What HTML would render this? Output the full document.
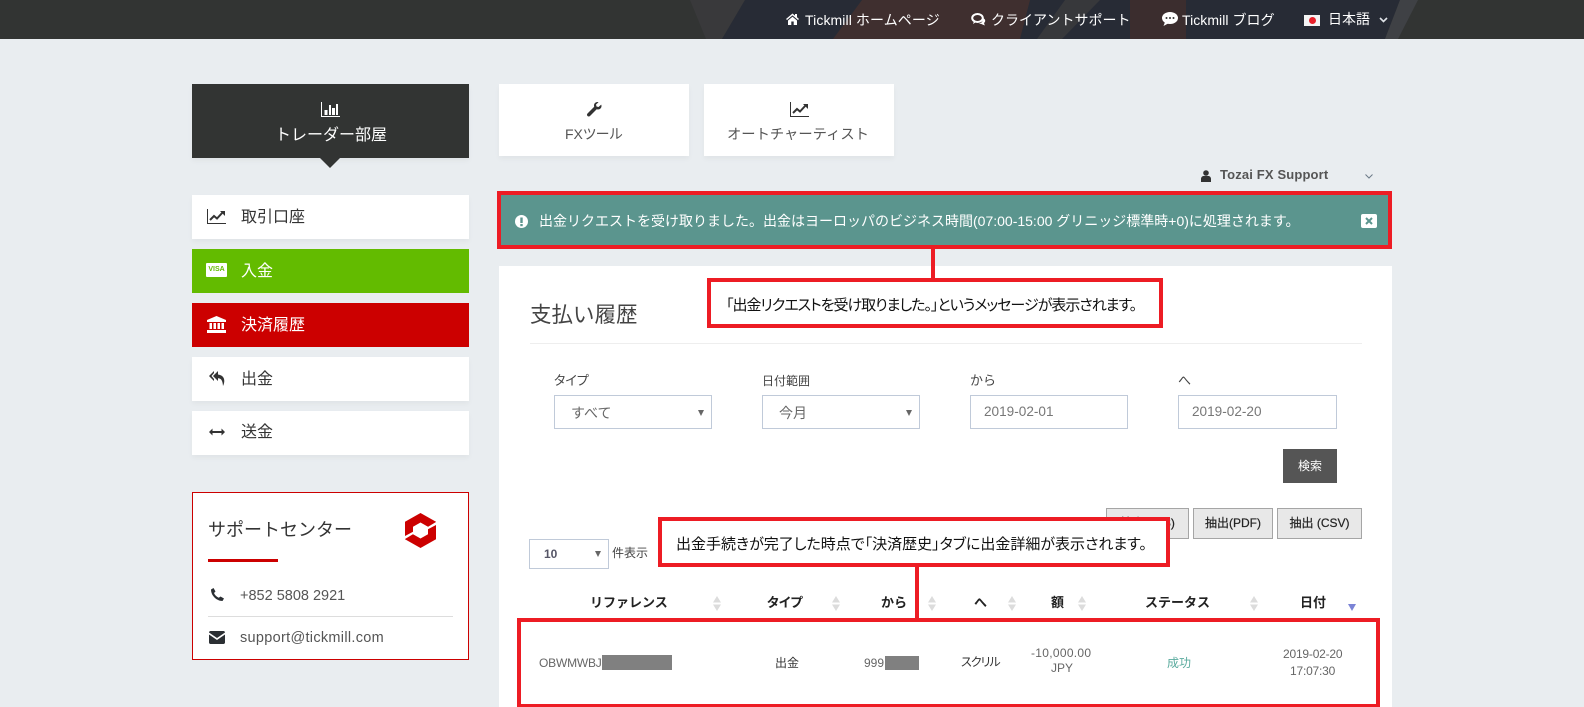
<!DOCTYPE html>
<html lang="ja"><head><meta charset="utf-8"><title>支払い履歴</title>
<style>
html,body{margin:0;padding:0}
body{width:1584px;height:707px;overflow:hidden;position:relative;background:#e9edf0;font-family:"Liberation Sans","Noto Sans CJK JP",sans-serif;color:#333}
.b{position:absolute;box-sizing:border-box}
.t{position:absolute;white-space:nowrap;line-height:20px}
.c{background:#fff;box-shadow:0 3px 5px rgba(0,0,0,.04)}
.m{font-size:16px;color:#333}
.w{color:#fff}
.l{font-size:12px;color:#444}
.f{background:#fff;border:1px solid #c0cad9}
.ar{position:absolute;width:0;height:0;border-left:3.500px solid transparent;border-right:3.500px solid transparent;border-top:6px solid #666}
.ex{background:#e8e8e8;border:1px solid #a5a5a5;font-size:12px;color:#222;text-align:center;line-height:29px;-webkit-text-stroke:.2px #222}
.r{border:4px solid #ed1c24;background:#fff}
.rl{position:absolute;background:#ed1c24}
.co{font-size:15px;color:#111;font-feature-settings:"palt";}
.h{font-size:13px;font-weight:700;color:#222}
.td{font-size:12px;color:#666}
.g{position:absolute;background:#808080}
svg{position:absolute;overflow:visible}
</style></head><body>

<!-- top bar -->
<svg style="left:0;top:0" width="1584" height="39" viewBox="0 0 1584 39">
<rect width="1584" height="39" fill="#323433"/>
<polygon points="690,0 745,0 722,39 706,39" fill="#39393b"/>
<polygon points="745,0 1400,0 1385,39 722,39" fill="#272b35"/>
<polygon points="862,0 1030,0 1020,39 833,39" fill="#3f2f2f"/>
<polygon points="1065,0 1100,0 1062,39 1037,39" fill="#37383b"/>
<polygon points="1130,0 1186,0 1186,39 1130,39" fill="#3b2d2e"/>
<polygon points="1400,0 1418,0 1398,39 1385,39" fill="#3f4145"/>
</svg>
<svg style="left:786px;top:13px" width="13" height="12" viewBox="0 0 13 12"><path d="M6.500.5 0 6l1 1 5.500-4.600L12 7l1-1-2-1.700V1H9v1.600zM2 7.500V12h3.300V8.500h2.400V12H11V7.500L6.500 3.700z" fill="#fff"/></svg>
<div class="t w" style="left:805px;top:10px;font-size:14px;letter-spacing:.1px">Tickmill ホームページ</div>
<svg style="left:971px;top:13px" width="15" height="13" viewBox="0 0 15 13"><ellipse cx="6.500" cy="5" rx="5.300" ry="4" fill="none" stroke="#fff" stroke-width="2"/><path d="M3 8 2 11l4-2.500zM12 5c2.500 1 3 3.500 1 5l.8 2.500-3.500-1.500-3-.5c2 0 5-1 4.700-5.500z" fill="#fff"/></svg>
<div class="t w" style="left:991px;top:10px;font-size:14px">クライアントサポート</div>
<svg style="left:1162px;top:12px" width="16" height="14" viewBox="0 0 16 14"><ellipse cx="8" cy="6" rx="8" ry="6" fill="#fff"/><path d="M3 10 1.500 14 7 11z" fill="#fff"/><circle cx="4.500" cy="6" r="1" fill="#333"/><circle cx="8" cy="6" r="1" fill="#333"/><circle cx="11.500" cy="6" r="1" fill="#333"/></svg>
<div class="t w" style="left:1182px;top:10px;font-size:14px;letter-spacing:.05px">Tickmill ブログ</div>
<div class="b" style="left:1304px;top:15px;width:16px;height:11px;background:#f4f4f4"></div>
<div class="b" style="left:1308.500px;top:17px;width:7px;height:7px;border-radius:50%;background:#e8202a"></div>
<div class="t w" style="left:1328px;top:9px;font-size:14px">日本語</div>
<svg style="left:1379px;top:17px" width="9" height="6" viewBox="0 0 9 6"><path d="M1 1l3.500 3.500L8 1" fill="none" stroke="#dfe3e8" stroke-width="1.600"/></svg>

<!-- sidebar -->
<div class="b" style="left:192px;top:84px;width:277px;height:74px;background:#323433;box-shadow:0 3px 5px rgba(0,0,0,.04)"></div>
<div class="b" style="left:320px;top:158px;width:0;height:0;border-left:10px solid transparent;border-right:10px solid transparent;border-top:10px solid #323433"></div>
<svg style="left:321px;top:102px" width="19" height="15" viewBox="0 0 19 15"><path d="M.5 0v14.500H19" fill="none" stroke="#fff"/><rect x="3.500" y="8" width="3" height="5" fill="#fff"/><rect x="8" y="3" width="2" height="10" fill="#fff"/><rect x="11" y="6" width="3" height="7" fill="#fff"/><rect x="15" y="2" width="2" height="11" fill="#fff"/></svg>
<div class="t w" style="left:275px;top:126px;font-size:16px">トレーダー部屋</div>

<div class="b c" style="left:192px;top:195px;width:277px;height:44px"></div>
<svg style="left:207px;top:209px" width="19" height="15" viewBox="0 0 19 15"><path d="M.5 0v14.500H19" fill="none" stroke="#333"/><path d="M3 11l4-4 3 2.500L16 3" fill="none" stroke="#333" stroke-width="2"/><path d="M13 2h5v5z" fill="#333"/></svg>
<div class="t m" style="left:241px;top:208px">取引口座</div>

<div class="b" style="left:192px;top:249px;width:277px;height:44px;background:#63bb00"></div>
<div class="b" style="left:206px;top:263px;width:21px;height:14px;background:#fff;border-radius:1px"></div>
<div class="t" style="left:206px;top:260px;width:21px;text-align:center;font-size:7px;font-weight:700;color:#63bb00">VISA</div>
<div class="t m w" style="left:241px;top:262px">入金</div>

<div class="b" style="left:192px;top:303px;width:277px;height:44px;background:#cc0000"></div>
<svg style="left:207px;top:316px" width="19" height="17" viewBox="0 0 19 17"><path d="M9.500 0 0 4v2h19V4z" fill="#fff"/><rect y="14" width="19" height="3" fill="#fff"/><rect x="2.500" y="7" width="2.500" height="6" fill="#fff"/><rect x="6.500" y="7" width="2.500" height="6" fill="#fff"/><rect x="10.500" y="7" width="2.500" height="6" fill="#fff"/><rect x="14.500" y="7" width="2.500" height="6" fill="#fff"/></svg>
<div class="t m w" style="left:241px;top:316px">決済履歴</div>

<div class="b c" style="left:192px;top:357px;width:277px;height:44px"></div>
<svg style="left:209px;top:371px" width="16" height="15" viewBox="0 0 16 15"><path d="M5 0 0 5l5 5V8L2.500 5 5 2z" fill="#333"/><path d="M9 0 4 5l5 5V7.200c3 0 4.500 1.800 5 7.800 2-4 2.500-10.500-5-11.500z" fill="#333"/></svg>
<div class="t m" style="left:241px;top:370px">出金</div>

<div class="b c" style="left:192px;top:411px;width:277px;height:44px"></div>
<svg style="left:209px;top:428px" width="16" height="8" viewBox="0 0 16 8"><path d="M0 4l3.500-3.500V3h9V.500L16 4l-3.500 3.500V5h-9v2.500z" fill="#333"/></svg>
<div class="t m" style="left:241px;top:423px">送金</div>

<div class="b" style="left:192px;top:492px;width:277px;height:168px;background:#fff;border:1px solid #cc0000"></div>
<div class="t" style="left:208px;top:520px;font-size:18px;color:#333">サポートセンター</div>
<svg style="left:405px;top:513px" width="31" height="35" viewBox="0 0 31 35"><path d="M15.500 0 31 8.700v17.600L15.500 35 0 26.300V8.700z" fill="#cc0000"/><path d="M15.500 9.500 23 13.700v7.600l-7.500 4.200L8 21.300v-7.600z" fill="#fff"/><path d="M31 9 21 15l1.500 1.500L31 12zM0 26l10-6-1.500-1.500L0 23z" fill="#fff"/></svg>
<div class="b" style="left:208px;top:559px;width:70px;height:3px;background:#cc0000"></div>
<svg style="left:211px;top:588px" width="13" height="13" viewBox="0 0 13 13"><path d="M0 1.500 2.500 0l2 3.500L3 5c.8 2 2.500 3.800 4.800 4.800L9.500 8.500 13 10.500 11.500 13C5.500 13 0 7.500 0 1.500z" fill="#2b2f33"/></svg>
<div class="t" style="left:240px;top:586px;font-size:14.500px;color:#555">+852 5808 2921</div>
<div class="b" style="left:208px;top:616px;width:245px;height:1px;background:#ddd"></div>
<svg style="left:209px;top:631px" width="16" height="13" viewBox="0 0 16 13"><path d="M1.500 0h13c.8 0 1.500.7 1.500 1.500L8 7 0 1.500C0 .7.700 0 1.500 0zM0 3.500 8 9l8-5.500v8c0 .8-.7 1.500-1.500 1.500h-13C.7 13 0 12.300 0 11.500z" fill="#2b2f33"/></svg>
<div class="t" style="left:240px;top:628px;font-size:14.500px;color:#555;letter-spacing:.3px">support@tickmill.com</div>

<!-- tabs -->
<div class="b c" style="left:499px;top:84px;width:190px;height:72px"></div>
<svg style="left:587px;top:102px" width="15" height="15" viewBox="0 0 15 15"><path d="M10.500 0C8.500 0 7 1.500 7 3.500c0 .5 0 .9.200 1.300L.5 11.500c-.7.700-.7 1.800 0 2.500s1.800.7 2.500 0l6.700-6.700c.4.200.8.200 1.300.2 2 0 3.500-1.500 3.500-3.500 0-.5-.1-1-.3-1.400L11.500 5 9.500 4.500 9 2.500 11.500.2c-.3-.1-.7-.2-1-.2z" fill="#333"/></svg>
<div class="t" style="left:565px;top:124px;font-size:14px;color:#555;font-feature-settings:'palt'">FXツール</div>
<div class="b c" style="left:704px;top:84px;width:190px;height:72px"></div>
<svg style="left:790px;top:102px" width="19" height="15" viewBox="0 0 19 15"><path d="M.5 0v14.500H19" fill="none" stroke="#333"/><path d="M3 11l4-4 3 2.500L16 3" fill="none" stroke="#333" stroke-width="2"/><path d="M13 2h5v5z" fill="#333"/></svg>
<div class="t" style="left:727px;top:125px;font-size:14.300px;color:#555">オートチャーティスト</div>

<!-- user -->
<svg style="left:1201px;top:170px" width="10" height="12" viewBox="0 0 10 12"><circle cx="5" cy="3" r="2.800" fill="#333"/><path d="M0 12V9c0-2 1.500-3 2.500-3h5C8.500 6 10 7 10 9v3z" fill="#333"/></svg>
<div class="t" style="left:1220px;top:165px;font-size:13px;font-weight:700;color:#555;letter-spacing:.15px">Tozai FX Support</div>
<svg style="left:1365px;top:174px" width="8" height="5" viewBox="0 0 8 5"><path d="M.5.500 4 4 7.500.500" fill="none" stroke="#6b7a88"/></svg>

<!-- card -->
<div class="b" style="left:499px;top:266px;width:893px;height:441px;background:#fff"></div>

<!-- alert -->
<div class="b" style="left:497px;top:191px;width:895px;height:58px;background:#5b958e;border:4px solid #ed1c24"></div>
<svg style="left:515px;top:215px" width="13" height="13" viewBox="0 0 13 13"><circle cx="6.500" cy="6.500" r="6.500" fill="#fff"/><rect x="5.300" y="2.500" width="2.400" height="5.500" fill="#5b958e"/><rect x="5.300" y="9" width="2.400" height="2.200" fill="#5b958e"/></svg>
<div class="t w" style="left:539px;top:211px;font-size:14px">出金リクエストを受け取りました。出金はヨーロッパのビジネス時間(07:00-15:00 グリニッジ標準時+0)に処理されます。</div>
<div class="b" style="left:1361px;top:214px;width:16px;height:14px;background:#fff;border-radius:2px"></div>
<svg style="left:1365px;top:217px" width="8" height="8" viewBox="0 0 8 8"><path d="M1 1l6 6M7 1 1 7" stroke="#5b958e" stroke-width="2"/></svg>

<!-- title -->
<div class="t" style="left:530px;top:303px;font-size:21.500px;line-height:24px;color:#444">支払い履歴</div>
<div class="b" style="left:530px;top:343px;width:832px;height:1px;background:#eee"></div>

<div class="t l" style="left:554px;top:371px;font-feature-settings:'palt';font-size:13px">タイプ</div>
<div class="t l" style="left:762px;top:371px">日付範囲</div>
<div class="t l" style="left:970px;top:371px;font-size:13px">から</div>
<div class="t l" style="left:1178px;top:371px;font-size:13px">へ</div>

<div class="b f" style="left:554px;top:395px;width:158px;height:34px"></div>
<div class="t" style="left:571px;top:403px;font-size:14px;color:#666">すべて</div>
<div class="ar" style="left:698px;top:410px"></div>
<div class="b f" style="left:762px;top:395px;width:158px;height:34px"></div>
<div class="t" style="left:779px;top:403px;font-size:14px;color:#666">今月</div>
<div class="ar" style="left:906px;top:410px"></div>
<div class="b f" style="left:970px;top:395px;width:158px;height:34px"></div>
<div class="t" style="left:984px;top:402px;font-size:13.600px;color:#777">2019-02-01</div>
<div class="b f" style="left:1178px;top:395px;width:159px;height:34px"></div>
<div class="t" style="left:1192px;top:402px;font-size:13.600px;color:#777">2019-02-20</div>

<div class="b" style="left:1283px;top:449px;width:54px;height:34px;background:#555;color:#fff;font-size:12px;line-height:34px;text-align:center">検索</div>

<div class="b ex" style="left:1106px;top:508px;width:83px;height:31px">抽出(XLS)</div>
<div class="b ex" style="left:1193px;top:508px;width:80px;height:31px">抽出(PDF)</div>
<div class="b ex" style="left:1277px;top:508px;width:85px;height:31px">抽出 (CSV)</div>

<div class="b f" style="left:529px;top:539px;width:80px;height:30px"></div>
<div class="t" style="left:544px;top:544px;font-size:12px;font-weight:700;color:#556">10</div>
<div class="ar" style="left:595px;top:551px"></div>
<div class="t l" style="left:612px;top:543px">件表示</div>

<!-- table head -->
<div class="t h" style="left:590px;top:593px">リファレンス</div>
<div class="t h" style="left:767px;top:593px;font-feature-settings:'palt'">タイプ</div>
<div class="t h" style="left:881px;top:593px">から</div>
<div class="t h" style="left:974px;top:593px">へ</div>
<div class="t h" style="left:1051px;top:593px">額</div>
<div class="t h" style="left:1145px;top:593px">ステータス</div>
<div class="t h" style="left:1300px;top:593px">日付</div>
<svg style="left:713px;top:596px" width="8" height="15" viewBox="0 0 8 15"><path d="M4 0l4 6.500H0zM4 15l4-6.500H0z" fill="#dcdcdc"/></svg>
<svg style="left:832px;top:596px" width="8" height="15" viewBox="0 0 8 15"><path d="M4 0l4 6.500H0zM4 15l4-6.500H0z" fill="#dcdcdc"/></svg>
<svg style="left:928px;top:596px" width="8" height="15" viewBox="0 0 8 15"><path d="M4 0l4 6.500H0zM4 15l4-6.500H0z" fill="#dcdcdc"/></svg>
<svg style="left:1008px;top:596px" width="8" height="15" viewBox="0 0 8 15"><path d="M4 0l4 6.500H0zM4 15l4-6.500H0z" fill="#dcdcdc"/></svg>
<svg style="left:1078px;top:596px" width="8" height="15" viewBox="0 0 8 15"><path d="M4 0l4 6.500H0zM4 15l4-6.500H0z" fill="#dcdcdc"/></svg>
<svg style="left:1250px;top:596px" width="8" height="15" viewBox="0 0 8 15"><path d="M4 0l4 6.500H0zM4 15l4-6.500H0z" fill="#dcdcdc"/></svg>
<svg style="left:1348px;top:604px" width="8" height="7" viewBox="0 0 8 7"><path d="M0 0h8L4 7z" fill="#7b83d6"/></svg>

<!-- highlight rect + row -->
<div class="b" style="left:517px;top:618px;width:863px;height:89px;border:4px solid #ed1c24;border-bottom-width:3px"></div>
<div class="t td" style="left:539px;top:653px;letter-spacing:-.2px">OBWMWBJ</div>
<div class="g" style="left:602px;top:655px;width:70px;height:15px"></div>
<div class="t" style="left:775px;top:653px;font-size:12px;color:#333">出金</div>
<div class="t td" style="left:864px;top:653px">999</div>
<div class="g" style="left:885px;top:656px;width:34px;height:14px"></div>
<div class="t" style="left:961px;top:652px;font-size:12px;color:#333;font-feature-settings:'palt';letter-spacing:-1px">スクリル</div>
<div class="t td" style="left:1031px;top:643px;letter-spacing:.3px">-10,000.00</div>
<div class="t td" style="left:1051px;top:658px">JPY</div>
<div class="t" style="left:1167px;top:653px;font-size:12px;color:#5aab9e">成功</div>
<div class="t td" style="left:1283px;top:644px;letter-spacing:-.2px">2019-02-20</div>
<div class="t td" style="left:1290px;top:661px;letter-spacing:-.2px">17:07:30</div>

<!-- callouts -->
<div class="rl" style="left:931px;top:249px;width:4px;height:30px"></div>
<div class="b r" style="left:707px;top:278px;width:456px;height:50px"></div>
<div class="t co" style="left:726px;top:296px;letter-spacing:-1px">「出金リクエストを受け取りました。」というメッセージが表示されます。</div>

<div class="rl" style="left:915px;top:566px;width:4px;height:53px"></div>
<div class="b r" style="left:658px;top:517px;width:512px;height:50px"></div>
<div class="t co" style="left:676px;top:535px">出金手続きが完了した時点で「決済歴史」タブに出金詳細が表示されます。</div>

</body></html>
